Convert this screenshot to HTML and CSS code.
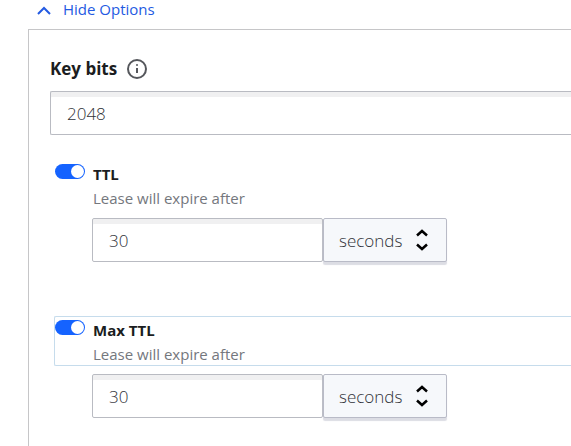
FILE: index.html
```html
<!DOCTYPE html>
<html lang="en">
<head>
<meta charset="utf-8">
<title>Options</title>
<link rel="stylesheet" href="styles.css">
</head>
<body>
<button class="disclosure" type="button" aria-expanded="true">
  <svg class="chevron" viewBox="0 0 14 12" aria-hidden="true"><path d="M1 11 7 5 13 11"/></svg>
  <span>Hide Options</span>
</button>
<form class="panel">
  <div class="label-row">
    <label for="bits">Key bits</label>
    <svg class="info" viewBox="0 0 20 20" aria-hidden="true"><circle cx="10" cy="10" r="9"/><path d="M10 9v5"/><circle class="dot" cx="10" cy="6" r="1"/></svg>
  </div>
  <input class="field wide" id="bits" type="text" value="2048">

  <section class="ttl">
    <div class="ttl-head">
      <input class="toggle" id="ttl" type="checkbox" checked>
      <div class="ttl-text">
        <label for="ttl">TTL</label>
        <p>Lease will expire after</p>
      </div>
    </div>
    <div class="duration">
      <input class="field" type="text" value="30" aria-label="TTL duration">
      <div class="unit">
        <select aria-label="TTL unit"><option>seconds</option></select>
        <svg viewBox="0 0 24 48" aria-hidden="true"><path d="M2 15 12 6 22 15M2 33 12 42 22 33"/></svg>
      </div>
    </div>
  </section>

  <section class="ttl">
    <div class="ttl-head focused">
      <input class="toggle" id="max-ttl" type="checkbox" checked>
      <div class="ttl-text">
        <label for="max-ttl">Max TTL</label>
        <p>Lease will expire after</p>
      </div>
    </div>
    <div class="duration">
      <input class="field" type="text" value="30" aria-label="Max TTL duration">
      <div class="unit">
        <select aria-label="Max TTL unit"><option>seconds</option></select>
        <svg viewBox="0 0 24 48" aria-hidden="true"><path d="M2 15 12 6 22 15M2 33 12 42 22 33"/></svg>
      </div>
    </div>
  </section>
</form>
</body>
</html>
```
FILE: styles.css
```css
* { box-sizing: border-box; }

body {
  margin: 0;
  padding-left: 28px;
  background: #fff;
  color: #1b1d21;
  font-family: "Segoe UI", "Open Sans", "Noto Sans", sans-serif;
  font-size: 15px;
}

input, select, button { font: inherit; margin: 0; }

.disclosure {
  display: flex;
  align-items: center;
  gap: 12px;
  height: 18px;
  margin-bottom: 11px;
  padding: 0 9px;
  border: 0;
  background: none;
  color: #235ae2;
  font-size: 15px;
  font-weight: 500;
  line-height: 18px;
}

.chevron { width: 14px; height: 12px; fill: none; stroke: currentColor; stroke-width: 2; }

/* The panel is open on its right side and meets the window edge. */
.panel {
  padding: 25px 0 28px 21px;
  border: 1px solid #c6c6c8;
  border-width: 1px 0 0 1px;
}

.label-row {
  display: flex;
  align-items: center;
  gap: 10px;
  height: 28px;
  margin-bottom: 8px;
  font-size: 17px;
  font-weight: 700;
  line-height: 24px;
}

.info { width: 20px; height: 20px; fill: none; stroke: #55575c; stroke-width: 2; }
.info .dot { fill: #55575c; stroke: none; }

.field {
  display: block;
  width: 100%;
  height: 44px;
  padding: 2px 16px;
  border: 1px solid #b9bbc2;
  border-radius: 2px;
  background: #fff;
  box-shadow: inset 0 5px 0 #f0f0f1;
  color: #303238;
  font-size: 17px;
  font-weight: 300;
}
.field.wide { border-right: 0; border-radius: 2px 0 0 2px; }

.ttl { margin-top: 25px; }
.ttl + .ttl { margin-top: 54px; }

.ttl-head {
  display: flex;
  gap: 8px;
  height: 50px;
  margin-left: 4px;
  border: 1px solid transparent;
  border-right: 0;
  border-radius: 2px 0 0 2px;
}
.ttl-head.focused { border-color: #c6dcec; }

.toggle {
  appearance: none;
  flex: none;
  width: 30px;
  height: 15px;
  margin-top: 3px;
  padding: 1px;
  border-radius: 8px;
  background: #1563ff;
}
.toggle::before {
  content: "";
  display: block;
  width: 13px;
  height: 13px;
  margin-left: 15px;
  border-radius: 50%;
  background: #fff;
}

.ttl-text { line-height: 24px; padding-top: 1px; }
.ttl-text label { display: block; font-weight: 700; }
.ttl-text p { margin: 0; color: #74777d; }

.duration {
  display: flex;
  width: 355px;
  margin: 8px 0 0 42px;
}
.duration .field { flex: 1; min-width: 0; }

.unit { position: relative; flex: none; width: 124px; }
.unit select {
  appearance: none;
  width: 100%;
  height: 44px;
  padding: 0 15px;
  border: 1px solid #b9bbc7;
  border-radius: 2px;
  background: #f6f8fb;
  box-shadow: 0 3px 1px #dcdde4;
  color: #303238;
  font-size: 17px;
  font-weight: 300;
}
.unit svg {
  position: absolute;
  top: 10px;
  right: 19px;
  width: 12px;
  height: 24px;
  fill: none;
  stroke: #000;
  stroke-width: 5;
  pointer-events: none;
}
```
